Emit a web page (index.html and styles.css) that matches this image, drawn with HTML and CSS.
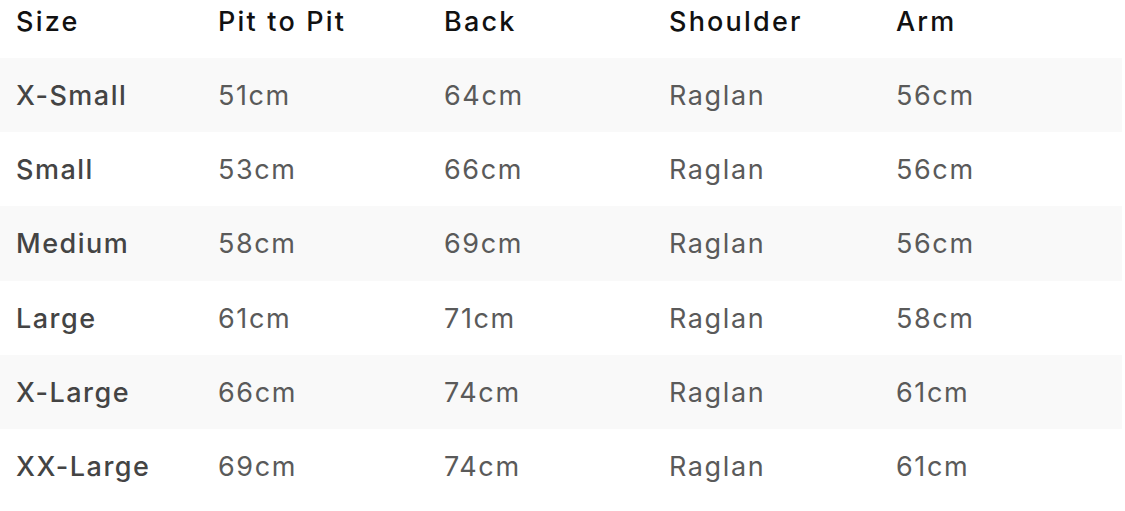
FILE: index.html
```html
<!DOCTYPE html>
<html>
<head>
<meta charset="utf-8">
<link rel="stylesheet" href="styles.css">
</head>
<body>
<div class="table">
  <div class="row head">
    <div class="cell">Size</div><div class="cell">Pit to Pit</div><div class="cell">Back</div><div class="cell">Shoulder</div><div class="cell">Arm</div>
  </div>
  <div class="row alt">
    <div class="cell name">X-Small</div><div class="cell">51cm</div><div class="cell">64cm</div><div class="cell">Raglan</div><div class="cell">56cm</div>
  </div>
  <div class="row">
    <div class="cell name">Small</div><div class="cell">53cm</div><div class="cell">66cm</div><div class="cell">Raglan</div><div class="cell">56cm</div>
  </div>
  <div class="row alt">
    <div class="cell name">Medium</div><div class="cell">58cm</div><div class="cell">69cm</div><div class="cell">Raglan</div><div class="cell">56cm</div>
  </div>
  <div class="row">
    <div class="cell name">Large</div><div class="cell">61cm</div><div class="cell">71cm</div><div class="cell">Raglan</div><div class="cell">58cm</div>
  </div>
  <div class="row alt">
    <div class="cell name">X-Large</div><div class="cell">66cm</div><div class="cell">74cm</div><div class="cell">Raglan</div><div class="cell">61cm</div>
  </div>
  <div class="row">
    <div class="cell name">XX-Large</div><div class="cell">69cm</div><div class="cell">74cm</div><div class="cell">Raglan</div><div class="cell">61cm</div>
  </div>
</div>
</body>
</html>
```

FILE: styles.css
```css
html, body {
  margin: 0;
  padding: 0;
  background: #ffffff;
}
body {
  font-family: "Inter", "Open Sans", sans-serif;
}
.table {
  width: 1122px;
  display: flex;
  flex-direction: column;
}
.row {
  display: grid;
  grid-template-columns: 202px 226px 225px 227px 1fr;
  height: 74.2px;
  align-items: center;
  font-size: 27px;
  letter-spacing: 1.6px;
  color: #5a5a5a;
}
.row.alt {
  background: #f9f9f9;
}
.row.head {
  height: 58px;
  align-items: start;
  padding-top: 2px;
  box-sizing: border-box;
  color: #111111;
  font-weight: 500;
  letter-spacing: 2.2px;
}
.cell {
  padding-left: 16px;
  padding-top: 2px;
  line-height: 36px;
  white-space: nowrap;
}
.cell.name {
  color: #444444;
  font-weight: 500;
  letter-spacing: 1.5px;
}
```
